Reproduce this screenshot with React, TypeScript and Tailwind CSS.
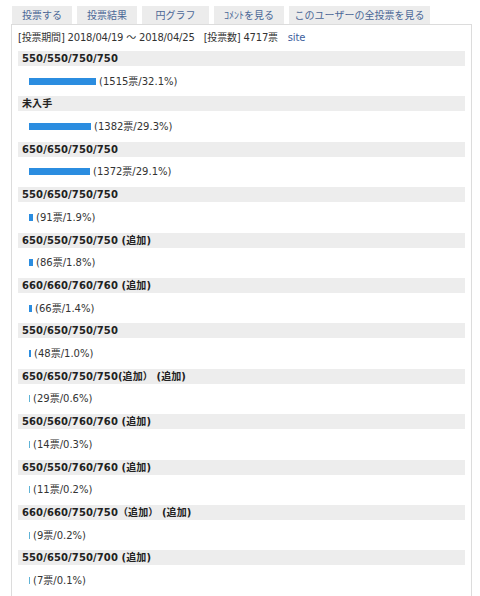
import React from "react";

const items: { label: string; votes: number; pct: number }[] = [
  { label: "550/550/750/750", votes: 1515, pct: 32.1 },
  { label: "未入手", votes: 1382, pct: 29.3 },
  { label: "650/650/750/750", votes: 1372, pct: 29.1 },
  { label: "550/650/750/750", votes: 91, pct: 1.9 },
  { label: "650/550/750/750 (追加)", votes: 86, pct: 1.8 },
  { label: "660/660/760/760 (追加)", votes: 66, pct: 1.4 },
  { label: "550/650/750/750", votes: 48, pct: 1.0 },
  { label: "650/650/750/750(追加） (追加)", votes: 29, pct: 0.6 },
  { label: "560/560/760/760 (追加)", votes: 14, pct: 0.3 },
  { label: "650/550/760/760 (追加)", votes: 11, pct: 0.2 },
  { label: "660/660/750/750（追加） (追加)", votes: 9, pct: 0.2 },
  { label: "550/650/750/700 (追加)", votes: 7, pct: 0.1 },
];

const tabs: { label: string; w: string }[] = [
  { label: "投票する", w: "w-[60px]" },
  { label: "投票結果", w: "w-[60px]" },
  { label: "円グラフ", w: "w-[67px]" },
  { label: "ｺﾒﾝﾄを見る", w: "w-[70px]" },
  { label: "このユーザーの全投票を見る", w: "w-[141px]" },
];

const font = {
  fontFamily: '"DejaVu Sans", Verdana, "Noto Sans CJK JP", sans-serif',
};

export default function App() {
  return (
    <div className="bg-white w-[480px] h-[596px] overflow-hidden pt-[6px] pl-[11px] text-[#333]" style={font}>
      <div className="flex gap-[5px] pl-[1px]">
        {tabs.map((t) => (
          <div
            key={t.label}
            className={`${t.w} h-[18px] bg-[#ececec] flex items-center justify-center text-[10px] text-[#4a6796]`}
          >
            {t.label}
          </div>
        ))}
      </div>
      <div className="w-[461px] border border-[#dcdcdc] px-[6px] pb-[2px]">
        <div className="h-[24px] mb-[2px] flex items-center text-[10px] text-[#333] whitespace-pre tracking-[-0.2px]">
          <span>[投票期間] 2018/04/19 ～ 2018/04/25</span>
          <span className="ml-[9px]">[投票数] 4717票</span>
          <span className="ml-[10px] text-[#3c5e9c]">site</span>
        </div>
        {items.map((it, i) => {
          const raw = it.pct * 2.1;
          const tiny = it.pct < 1;
          const w = tiny ? 1 : Math.round(raw);
          return (
            <div key={i}>
              <div className="h-[15px] bg-[#ededed] flex items-center pl-[4px] text-[10px] font-bold text-[#222] whitespace-pre tracking-[0.1px]">
                {it.label}
              </div>
              <div className="h-[30.4px] flex items-center pl-[11px] text-[10px] text-[#333]">
                <div
                  className={tiny ? "h-[7px] bg-[#5fb3d6]" : "h-[7px] bg-[#2b8de0]"}
                  style={{ width: `${w}px` }}
                />
                <span className="ml-[3px]">
                  ({it.votes}票/{it.pct.toFixed(1)}%)
                </span>
              </div>
            </div>
          );
        })}
        <div className="h-[15px] bg-[#ededed]" />
      </div>
    </div>
  );
}
